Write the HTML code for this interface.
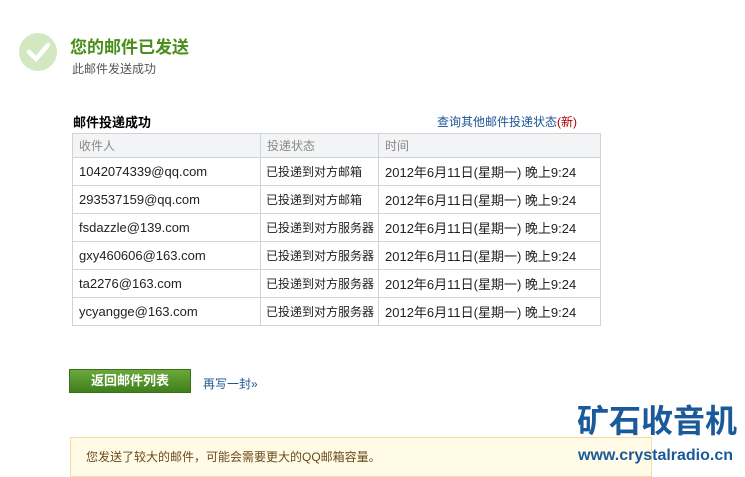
<!DOCTYPE html>
<html><head><meta charset="utf-8"><style>
*{margin:0;padding:0;box-sizing:border-box}
body{width:745px;height:469px;overflow:hidden;background:#fff;font-family:"Liberation Sans","Noto Sans CJK SC",sans-serif;position:relative;font-size:12px;color:#333}
.a{position:absolute;white-space:nowrap}
table{border-collapse:collapse;position:absolute;left:72px;top:133px;width:529px}
td{border:1px solid #cfd3d7;height:28px;padding-left:6px;font-size:13px;color:#222;white-space:nowrap}
tr.h td{height:24px;background:#f3f4f5;color:#888;font-size:12px}
td.s{font-size:12px;padding-left:5px}
</style></head><body>
<svg class="a" style="left:19px;top:33px" width="38" height="38"><circle cx="19" cy="19" r="19" fill="#d3e8c0"/><path d="M10 19 L17 26 L29 12" stroke="#fff" stroke-width="4.5" fill="none" stroke-linecap="round"/></svg>
<div class="a" style="left:70px;top:33px;font-size:17px;font-weight:bold;color:#4a8d1a">您的邮件已发送</div>
<div class="a" style="left:72px;top:60px;font-size:12px;color:#555">此邮件发送成功</div>
<div class="a" style="left:73px;top:112px;font-size:13px;font-weight:bold;color:#000">邮件投递成功</div>
<div class="a" style="left:437px;top:113px;font-size:12px;color:#1d5494">查询其他邮件投递状态<span style="color:#a00">(新)</span></div>
<table>
<tr class="h"><td style="width:188px">收件人</td><td style="width:118px">投递状态</td><td>时间</td></tr>
<tr><td>1042074339@qq.com</td><td class="s">已投递到对方邮箱</td><td>2012年6月11日(星期一) 晚上9:24</td></tr>
<tr><td>293537159@qq.com</td><td class="s">已投递到对方邮箱</td><td>2012年6月11日(星期一) 晚上9:24</td></tr>
<tr><td>fsdazzle@139.com</td><td class="s">已投递到对方服务器</td><td>2012年6月11日(星期一) 晚上9:24</td></tr>
<tr><td>gxy460606@163.com</td><td class="s">已投递到对方服务器</td><td>2012年6月11日(星期一) 晚上9:24</td></tr>
<tr><td>ta2276@163.com</td><td class="s">已投递到对方服务器</td><td>2012年6月11日(星期一) 晚上9:24</td></tr>
<tr><td>ycyangge@163.com</td><td class="s">已投递到对方服务器</td><td>2012年6月11日(星期一) 晚上9:24</td></tr>
</table>
<div class="a" style="left:69px;top:369px;width:122px;height:24px;background:linear-gradient(#6aa83a,#3f7f1c);border:1px solid #3a6f1a;color:#fff;font-weight:bold;font-size:13px;text-align:center;line-height:22px">返回邮件列表</div>
<div class="a" style="left:203px;top:375px;font-size:12px;color:#1d5494">再写一封»</div>
<div class="a" style="left:70px;top:437px;width:582px;height:40px;background:#fffbe6;border:1px solid #f3dea0"></div>
<div class="a" style="left:86px;top:448px;font-size:12px;color:#6b4a1a">您发送了较大的邮件，可能会需要更大的QQ邮箱容量。</div>
<div class="a" style="left:577px;top:401px;font-size:32px;line-height:40px;font-weight:bold;color:#1a5a9a;letter-spacing:0px">矿石收音机</div>
<div class="a" style="left:578px;top:446px;font-size:16px;line-height:20px;font-weight:bold;color:#1a5a9a">www.crystalradio.cn</div>
</body></html>
